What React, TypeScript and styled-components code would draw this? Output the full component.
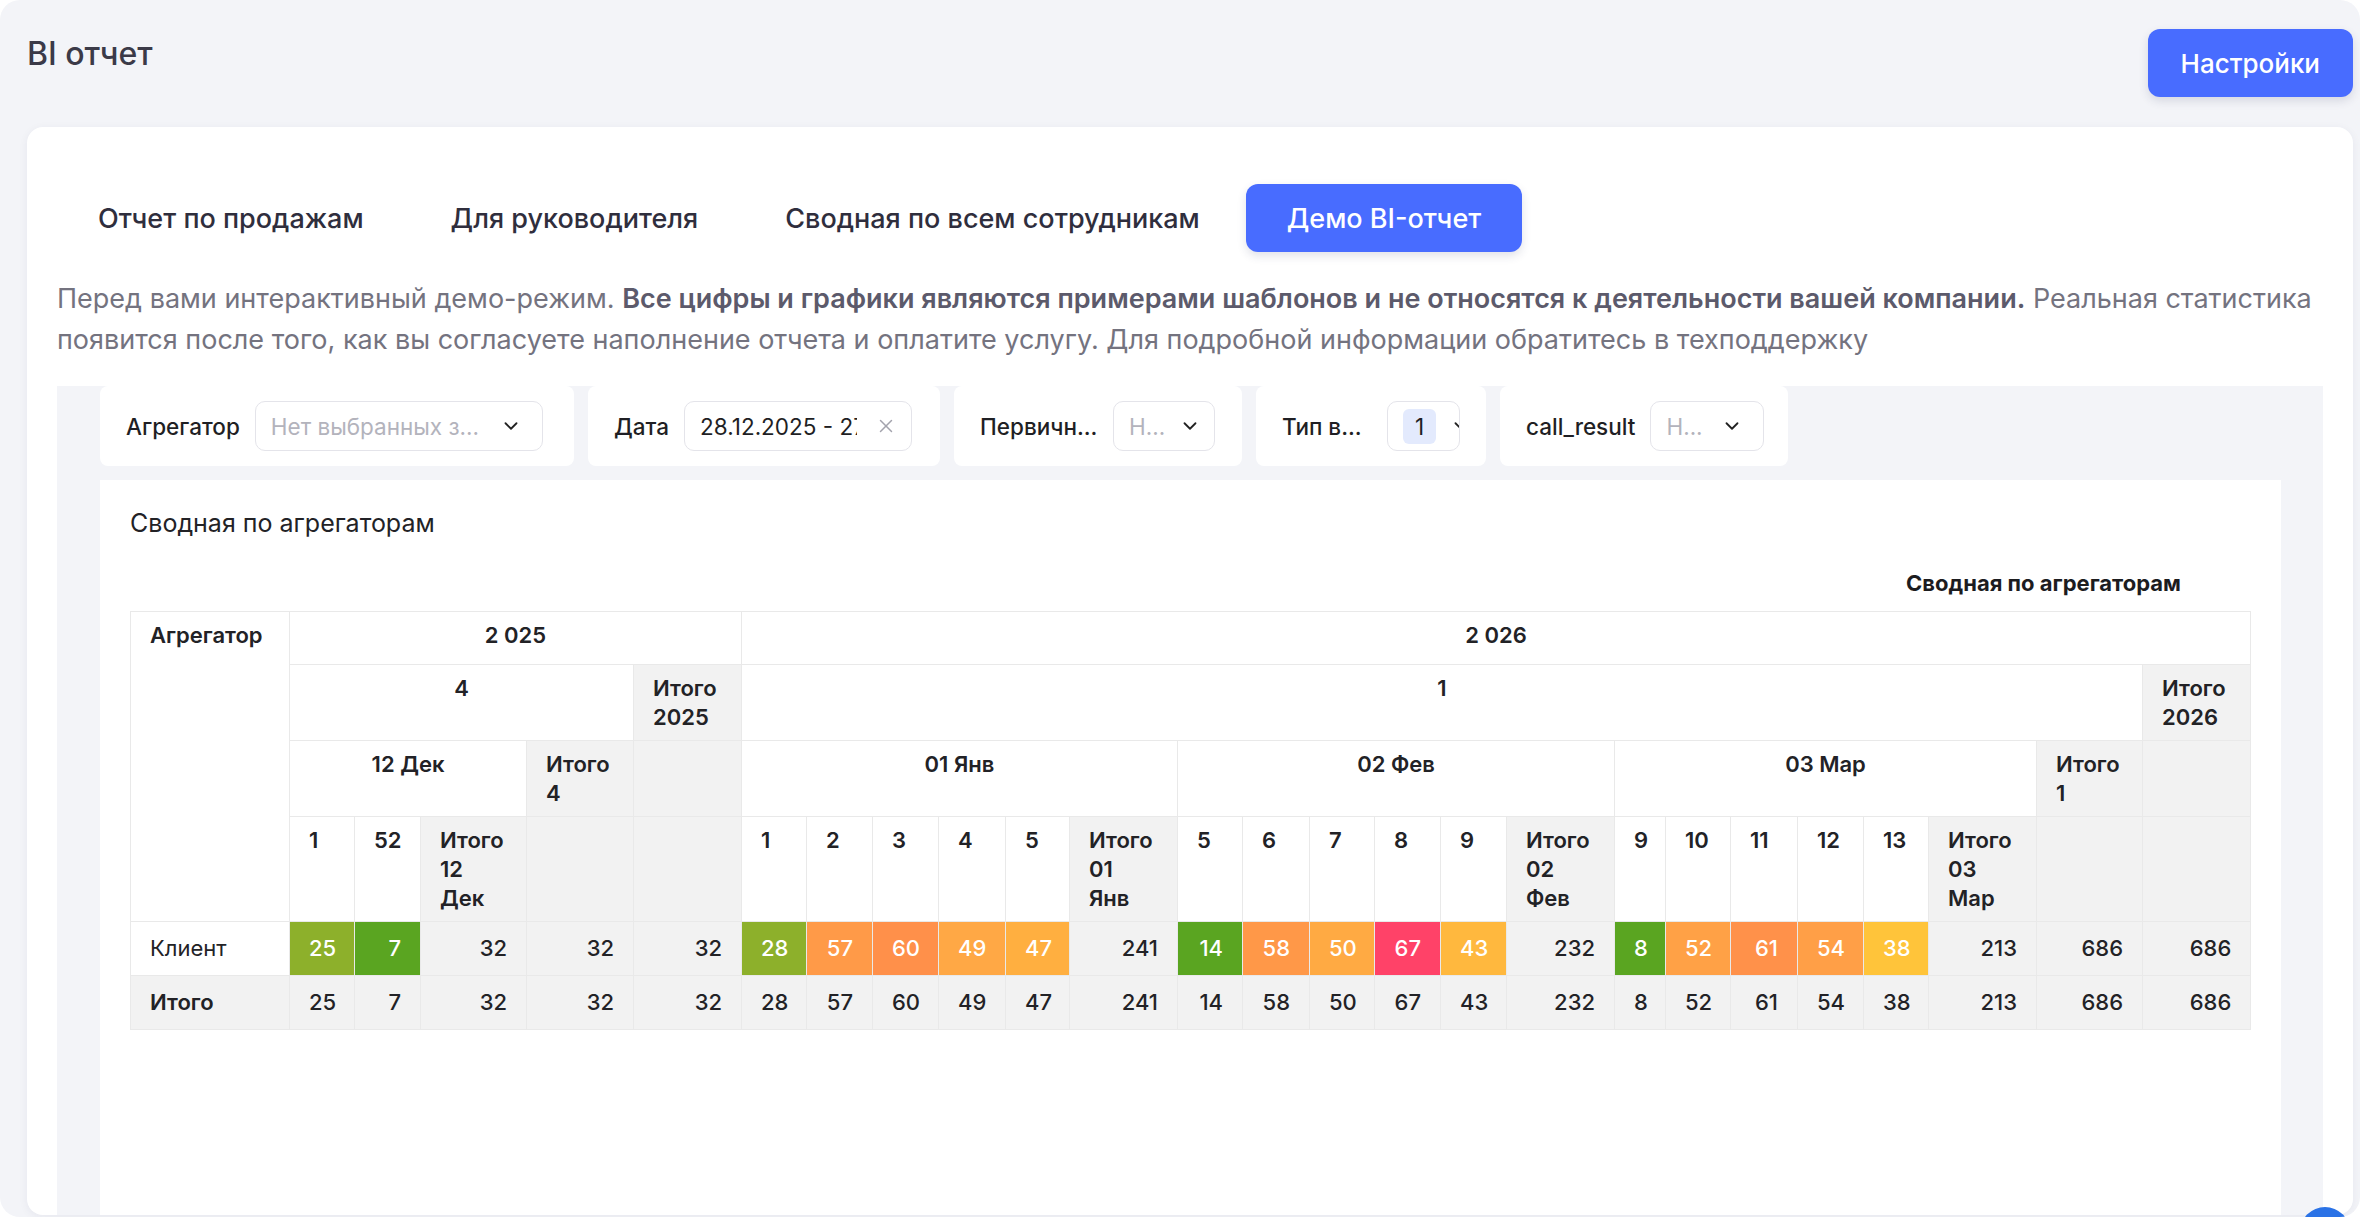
import React from "react";
import styled, { createGlobalStyle } from "styled-components";
import { ChevronDown, X } from "lucide-react";

const GlobalStyle = createGlobalStyle`
  html, body { margin: 0; padding: 0; background: #ffffff; }
  body { font-family: Inter, "Noto Sans", Arial, sans-serif; }
  * { box-sizing: border-box; }
`;

const Frame = styled.div`
  position: relative;
  width: 2360px;
  height: 1217px;
  border-radius: 20px;
  background: #f3f4f8;
  overflow: hidden;
  padding: 29px 7px 2px 27px;
  display: flex;
  flex-direction: column;
`;

const Header = styled.header`
  display: flex;
  justify-content: space-between;
  align-items: flex-start;
  height: 68px;
  margin-bottom: 30px;
  flex-shrink: 0;
`;

const PageTitle = styled.h1`
  margin: 0;
  padding-top: 6px;
  font-size: 32px;
  line-height: 38px;
  font-weight: 500;
  color: #3b3a48;
`;

const PrimaryButton = styled.button`
  height: 68px;
  padding: 0 33px;
  border: none;
  border-radius: 12px;
  background: #486cff;
  color: #ffffff;
  font-family: inherit;
  font-size: 26px;
  font-weight: 500;
  box-shadow: 0 4px 10px rgba(40, 50, 90, 0.14);
  cursor: pointer;
`;

const Card = styled.main`
  flex: 1;
  min-height: 0;
  background: #ffffff;
  border-radius: 16px;
  padding: 57px 30px 0;
  display: flex;
  flex-direction: column;
  box-shadow: 0 2px 10px rgba(30, 40, 80, 0.06);
  overflow: hidden;
`;

const Tabs = styled.nav`
  display: flex;
  gap: 5px;
  flex-shrink: 0;
`;

const Tab = styled.button<{ $active?: boolean }>`
  height: 68px;
  padding: 0 41px;
  border: none;
  border-radius: 12px;
  font-family: inherit;
  font-size: 27px;
  font-weight: 500;
  background: ${(p) => (p.$active ? "#486cff" : "transparent")};
  color: ${(p) => (p.$active ? "#ffffff" : "#2f2e3d")};
  box-shadow: ${(p) => (p.$active ? "0 4px 10px rgba(40, 50, 90, 0.14)" : "none")};
  cursor: pointer;
`;

const Description = styled.p`
  margin: 26px 0 26px;
  font-size: 27px;
  line-height: 41px;
  color: #74737f;
  flex-shrink: 0;
  strong {
    font-weight: 600;
    color: #5c5a6b;
  }
`;

const Panel = styled.section`
  flex: 1;
  min-height: 0;
  background: #f3f4f8;
  padding: 0 42px 0 43px;
  display: flex;
  flex-direction: column;
  gap: 14px;
`;

const FilterRow = styled.div`
  display: flex;
  gap: 14px;
  flex-shrink: 0;
`;

const FilterBox = styled.div<{ $w: number }>`
  width: ${(p) => p.$w}px;
  height: 80px;
  background: #ffffff;
  border-radius: 8px;
  padding: 0 0 0 26px;
  display: flex;
  align-items: center;
  gap: 15px;
`;

const FilterLabel = styled.span<{ $w?: number }>`
  font-size: 22.5px;
  font-weight: 500;
  color: #1f1f24;
  white-space: nowrap;
  ${(p) => (p.$w ? `width: ${p.$w}px; flex-shrink: 0;` : "")}
`;

const Select = styled.div<{ $w: number; $start?: boolean; $pr?: number }>`
  width: ${(p) => p.$w}px;
  height: 50px;
  flex-shrink: 0;
  border: 1px solid #e4e4ea;
  border-radius: 10px;
  padding: 0 ${(p) => p.$pr ?? 20}px 0 15px;
  display: flex;
  align-items: center;
  justify-content: ${(p) => (p.$start ? "flex-start" : "space-between")};
  gap: 14px;
  overflow: hidden;
  font-size: 22.5px;
  color: #1f1f24;
  svg { flex-shrink: 0; }
`;

const Placeholder = styled.span`
  color: #b3b3bc;
  white-space: nowrap;
`;

const DateText = styled.span`
  width: 157px;
  flex-shrink: 0;
  overflow: hidden;
  white-space: nowrap;
  color: #1f1f24;
`;

const Tag = styled.span`
  height: 35px;
  padding: 0 12px;
  border-radius: 6px;
  background: #e3eafd;
  display: flex;
  align-items: center;
  flex-shrink: 0;
`;

const ChartCard = styled.section`
  flex: 1;
  min-height: 0;
  background: #ffffff;
  padding: 28px 30px 0;
`;

const ChartTitle = styled.h2`
  margin: 0;
  font-size: 25px;
  line-height: 30px;
  font-weight: 400;
  color: #222226;
`;

const TableCaption = styled.div`
  margin: 31px 0 14px;
  padding-right: 70px;
  text-align: right;
  font-size: 22px;
  line-height: 28px;
  font-weight: 700;
  color: #1c1c1f;
`;

const Table = styled.table`
  border-collapse: collapse;
  table-layout: fixed;
  width: 2120px;
  font-size: 22px;
  line-height: 29px;
  color: #222226;
`;

const HeadRow = styled.tr<{ $h?: number }>`
  height: ${(p) => (p.$h ? `${p.$h}px` : "auto")};
`;

const Th = styled.th<{ $grey?: boolean; $center?: boolean }>`
  padding: 9px 19px 8px;
  vertical-align: top;
  text-align: ${(p) => (p.$center ? "center" : "left")};
  font-weight: 600;
  border: 1px solid #e9e9e9;
  background: ${(p) => (p.$grey ? "#f2f2f2" : "#ffffff")};
`;

const DataRow = styled.tr`
  height: 54px;
`;

const Td = styled.td<{ $bg?: string; $label?: boolean; $bold?: boolean }>`
  padding: 0 19px;
  vertical-align: middle;
  text-align: ${(p) => (p.$label ? "left" : "right")};
  font-weight: ${(p) => (p.$bold ? 600 : p.$label ? 400 : 500)};
  border: 1px solid #e9e9e9;
  background: ${(p) => p.$bg || "#f2f2f2"};
  color: ${(p) => (p.$bg && p.$bg !== "#ffffff" && p.$bg !== "#f2f2f2" ? "#ffffff" : "#222226")};
`;

const ChatBubble = styled.div`
  position: absolute;
  left: 2300px;
  top: 1207px;
  width: 50px;
  height: 50px;
  border-radius: 50%;
  background: #2a72e6;
`;

const colWidths = [
  159, 65, 66, 106, 107, 108, 65, 66, 66, 67, 64, 108, 65, 67, 65, 66, 66, 108, 51, 65, 67, 66, 65, 108, 106, 108,
];

const G = "#f2f2f2";
const C = {
  olive: "#8db02b",
  green: "#5aa521",
  yellow: "#ffc43a",
  amber: "#ffb83e",
  lightOrange: "#ffaa43",
  orange: "#ff9a48",
  deepOrange: "#ff904a",
  red: "#ff4268",
};

type Cell = { v: number; bg: string };

const clientRow: Cell[] = [
  { v: 25, bg: C.olive },
  { v: 7, bg: C.green },
  { v: 32, bg: G },
  { v: 32, bg: G },
  { v: 32, bg: G },
  { v: 28, bg: C.olive },
  { v: 57, bg: C.orange },
  { v: 60, bg: C.deepOrange },
  { v: 49, bg: "#ffa845" },
  { v: 47, bg: "#ffaf40" },
  { v: 241, bg: G },
  { v: 14, bg: C.green },
  { v: 58, bg: "#ff9848" },
  { v: 50, bg: C.lightOrange },
  { v: 67, bg: C.red },
  { v: 43, bg: C.amber },
  { v: 232, bg: G },
  { v: 8, bg: C.green },
  { v: 52, bg: "#ffa146" },
  { v: 61, bg: "#ff914a" },
  { v: 54, bg: "#ff9f47" },
  { v: 38, bg: C.yellow },
  { v: 213, bg: G },
  { v: 686, bg: G },
  { v: 686, bg: G },
];

const months = [
  { name: "01 Янв", days: ["1", "2", "3", "4", "5"] },
  { name: "02 Фев", days: ["5", "6", "7", "8", "9"] },
  { name: "03 Мар", days: ["9", "10", "11", "12", "13"] },
];

function PivotTable() {
  return (
    <Table>
      <colgroup>
        {colWidths.map((w, i) => (
          <col key={i} style={{ width: w }} />
        ))}
      </colgroup>
      <thead>
        <HeadRow $h={53}>
          <Th rowSpan={4}>Агрегатор</Th>
          <Th colSpan={5} $center>
            2 025
          </Th>
          <Th colSpan={20} $center>
            2 026
          </Th>
        </HeadRow>
        <HeadRow>
          <Th colSpan={4} $center>
            4
          </Th>
          <Th $grey>Итого 2025</Th>
          <Th colSpan={19} $center>
            1
          </Th>
          <Th $grey>Итого 2026</Th>
        </HeadRow>
        <HeadRow>
          <Th colSpan={3} $center>
            12 Дек
          </Th>
          <Th $grey>Итого 4</Th>
          <Th $grey />
          {months.map((m) => (
            <Th key={m.name} colSpan={6} $center>
              {m.name}
            </Th>
          ))}
          <Th $grey>Итого 1</Th>
          <Th $grey />
        </HeadRow>
        <HeadRow>
          <Th>1</Th>
          <Th>52</Th>
          <Th $grey>Итого 12 Дек</Th>
          <Th $grey />
          <Th $grey />
          {months.map((m) => (
            <React.Fragment key={m.name}>
              {m.days.map((d, i) => (
                <Th key={i}>{d}</Th>
              ))}
              <Th $grey>Итого {m.name}</Th>
            </React.Fragment>
          ))}
          <Th $grey />
          <Th $grey />
        </HeadRow>
      </thead>
      <tbody>
        <DataRow>
          <Td $label $bg="#ffffff">
            Клиент
          </Td>
          {clientRow.map((c, i) => (
            <Td key={i} $bg={c.bg}>
              {c.v}
            </Td>
          ))}
        </DataRow>
        <DataRow>
          <Td $label $bold $bg={G}>
            Итого
          </Td>
          {clientRow.map((c, i) => (
            <Td key={i} $bg={G}>
              {c.v}
            </Td>
          ))}
        </DataRow>
      </tbody>
    </Table>
  );
}

export default function App() {
  return (
    <>
      <GlobalStyle />
      <Frame>
        <Header>
          <PageTitle>BI отчет</PageTitle>
          <PrimaryButton>Настройки</PrimaryButton>
        </Header>
        <Card>
          <Tabs>
            <Tab>Отчет по продажам</Tab>
            <Tab>Для руководителя</Tab>
            <Tab>Сводная по всем сотрудникам</Tab>
            <Tab $active>Демо BI-отчет</Tab>
          </Tabs>
          <Description>
            Перед вами интерактивный демо-режим.{" "}
            <strong>
              Все цифры и графики являются примерами шаблонов и не относятся к деятельности вашей компании.
            </strong>{" "}
            Реальная статистика появится после того, как вы согласуете наполнение отчета и оплатите услугу. Для
            подробной информации обратитесь в техподдержку
          </Description>
          <Panel>
            <FilterRow>
              <FilterBox $w={474}>
                <FilterLabel>Агрегатор</FilterLabel>
                <Select $w={288}>
                  <Placeholder>Нет выбранных з...</Placeholder>
                  <ChevronDown size={22} color="#222" strokeWidth={2} />
                </Select>
              </FilterBox>
              <FilterBox $w={352}>
                <FilterLabel>Дата</FilterLabel>
                <Select $w={228} $pr={14}>
                  <DateText>28.12.2025 - 27.03.2026</DateText>
                  <X size={22} color="#a3a3ad" strokeWidth={1.6} />
                </Select>
              </FilterBox>
              <FilterBox $w={288}>
                <FilterLabel $w={118}>Первичн...</FilterLabel>
                <Select $w={102}>
                  <Placeholder>Н...</Placeholder>
                  <ChevronDown size={22} color="#222" strokeWidth={2} />
                </Select>
              </FilterBox>
              <FilterBox $w={230}>
                <FilterLabel $w={90}>Тип в...</FilterLabel>
                <Select $w={73} $start $pr={0}>
                  <Tag>1</Tag>
                  <ChevronDown size={22} color="#222" strokeWidth={2} />
                </Select>
              </FilterBox>
              <FilterBox $w={288}>
                <FilterLabel>call_result</FilterLabel>
                <Select $w={114}>
                  <Placeholder>Н...</Placeholder>
                  <ChevronDown size={22} color="#222" strokeWidth={2} />
                </Select>
              </FilterBox>
            </FilterRow>
            <ChartCard>
              <ChartTitle>Сводная по агрегаторам</ChartTitle>
              <TableCaption>Сводная по агрегаторам</TableCaption>
              <PivotTable />
            </ChartCard>
          </Panel>
        </Card>
        <ChatBubble />
      </Frame>
    </>
  );
}
